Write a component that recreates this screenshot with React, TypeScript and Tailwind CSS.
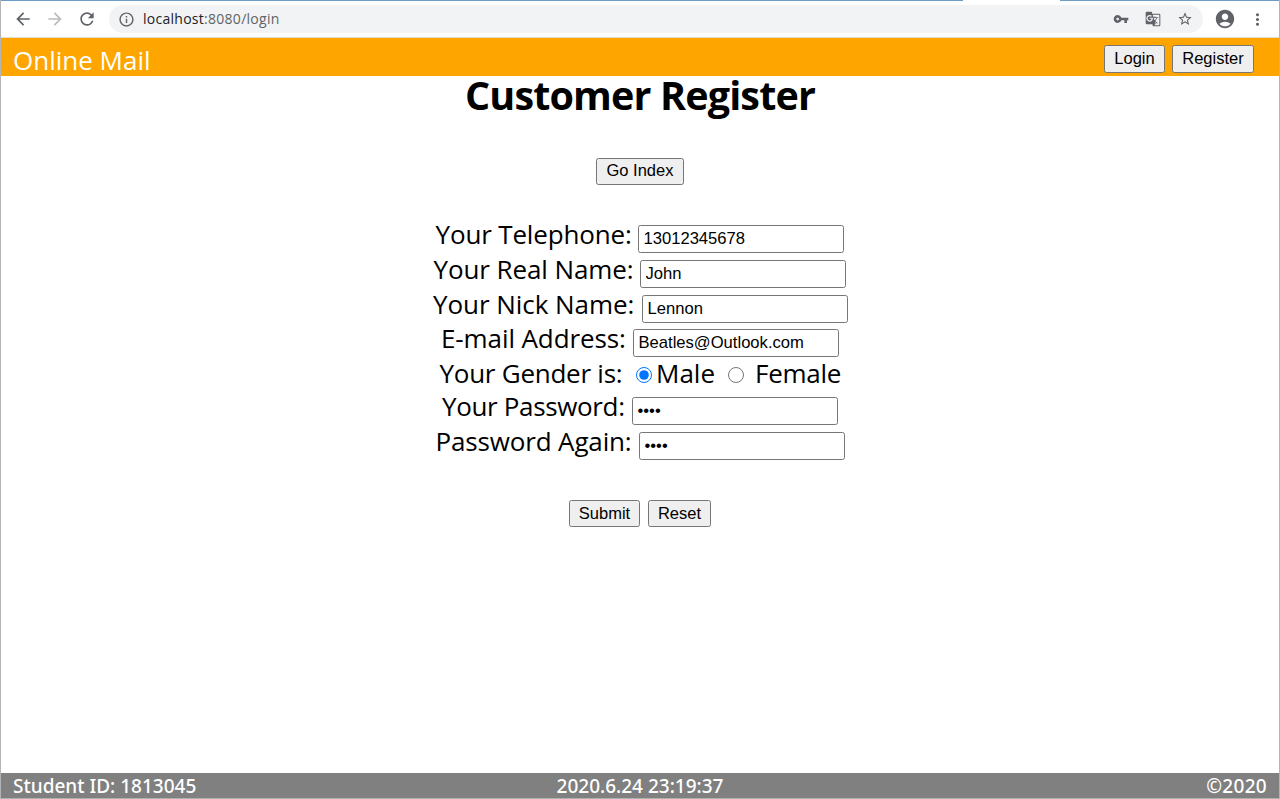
import React from 'react';
import {
  MdAccountCircle,
  MdArrowBack,
  MdArrowForward,
  MdGTranslate,
  MdInfoOutline,
  MdMoreVert,
  MdRefresh,
  MdStarBorder,
  MdVpnKey,
} from 'react-icons/md';

const buttonStyle =
  "flex shrink-0 items-center justify-center rounded-[2.5px] border border-[#767676] bg-[#efefef] font-['Liberation_Sans',sans-serif] text-[16.5px] leading-none text-black";

type FieldProps = {
  label: string;
  value: string;
  row: string;
  labelStyle: string;
  type?: string;
};

function Field({ label, value, row, labelStyle, type = 'text' }: FieldProps) {
  return (
    <div className={`flex items-end ${row}`}>
      <label className={`mb-[2px] whitespace-nowrap text-[26px] leading-[34px] ${labelStyle}`}>{label}</label>
      <input
        type={type}
        defaultValue={value}
        className="h-7 w-[206px] rounded-[2.5px] border border-[#767676] bg-white pb-[1px] pl-[4.5px] pr-1 font-['Liberation_Sans',sans-serif] text-[16.6px] leading-none text-black outline-none"
      />
    </div>
  );
}

function BrowserBar() {
  return (
    <div className="flex h-[37px] shrink-0 items-center border-b border-[#e4dccb] bg-white text-[#5f6368]">
      <MdArrowBack className="ml-3 size-5" />
      <MdArrowForward className="ml-3 size-5 text-[#babcbe]" />
      <MdRefresh className="ml-3 size-5" />
      <div className="ml-3 flex h-7 w-[1094px] items-center rounded-full bg-[#f1f3f4] pl-[9px]">
        <MdInfoOutline className="size-[17px]" />
        <span className="ml-2 text-[14px] leading-5 tracking-[0.27px]">
          <span className="text-[#202124]">localhost</span>:8080/login
        </span>
        <MdVpnKey className="ml-auto size-4" />
        <MdGTranslate className="ml-4 size-4" />
        <MdStarBorder className="ml-4 mr-[10px] size-4" />
      </div>
      <MdAccountCircle className="ml-[11px] size-[22px]" />
      <MdMoreVert className="ml-3 size-[19px]" />
    </div>
  );
}

export default function App() {
  return (
    <div className="flex h-[799px] w-[1280px] flex-col overflow-hidden border-x border-[#b4b4b4] bg-white font-['Open_Sans',sans-serif] text-black">
      <div className="flex h-px shrink-0 justify-between bg-white">
        <div className="w-[962px] bg-[#6d9cc4]" />
        <div className="w-[219px] bg-[#6d9cc4]" />
      </div>
      <BrowserBar />
      <header className="flex h-[38px] shrink-0 items-start bg-[#ffa500] pl-3 pr-[25px]">
        <span className="mt-[5px] text-[26px] leading-[34px] text-white">Online Mail</span>
        <button className={`${buttonStyle} ml-auto mt-[7px] h-7 w-[61px] pb-[2px]`}>Login</button>
        <button className={`${buttonStyle} ml-[7px] mt-[7px] h-7 w-[82px] pb-[2px]`}>Register</button>
      </header>
      <main className="flex flex-1 flex-col">
        <h1 className="-mt-px text-center text-[39.5px] font-bold leading-[40px] tracking-[-0.85px]">Customer Register</h1>
        <button className={`${buttonStyle} mt-[43px] h-[27px] w-[88px] self-center pb-[2px]`}>Go Index</button>
        <form className="mt-[33px] flex flex-col" onSubmit={(e) => e.preventDefault()}>
          <Field label="Your Telephone:" value="13012345678" row="h-[35px] pl-[434.5px]" labelStyle="w-[202.5px] tracking-[-0.15px]" />
          <Field label="Your Real Name:" value="John" row="h-[35px] pl-[432.5px]" labelStyle="w-[206.5px] tracking-[-0.1px]" />
          <Field label="Your Nick Name:" value="Lennon" row="h-[35px] pl-[432px]" labelStyle="w-[209px] tracking-[-0.05px]" />
          <Field label="E-mail Address:" value="Beatles@Outlook.com" row="h-[34px] pl-[440px]" labelStyle="w-[192px] tracking-[-0.1px]" />
          <div className="flex h-[33px] items-center pl-[438.5px] text-[26px] leading-[34px]">
            <span className="mb-[2px] w-[196.5px] whitespace-nowrap tracking-[-0.25px]">Your Gender is:</span>
            <input type="radio" name="gender" defaultChecked className="mt-[3px] size-4" />
            <span className="mb-[2px] ml-1 w-[72px]">Male</span>
            <input type="radio" name="gender" className="mt-[3px] size-4" />
            <span className="mb-[2px] ml-[11px] tracking-[-0.25px]">Female</span>
          </div>
          <Field label="Your Password:" value="1234" type="password" row="h-[35px] pl-[441px]" labelStyle="w-[190px] tracking-[-0.35px]" />
          <Field label="Password Again:" value="1234" type="password" row="h-[35px] pl-[434.5px]" labelStyle="w-[203.5px] tracking-[-0.15px]" />
          <div className="mt-10 flex justify-center gap-2">
            <button type="submit" className={`${buttonStyle} h-[27px] w-[71px] pb-px`}>Submit</button>
            <button type="reset" className={`${buttonStyle} h-[27px] w-[63px] pb-px`}>Reset</button>
          </div>
        </form>
      </main>
      <footer className="grid h-[26px] shrink-0 grid-cols-3 items-center border-b border-[#b0b0b0] bg-[#808080] px-3 font-['Noto_Sans',sans-serif] text-[19px] font-medium leading-6 text-white">
        <span>Student ID: 1813045</span>
        <span className="text-center">2020.6.24 23:19:37</span>
        <span className="text-right tracking-[0.3px]">©2020</span>
      </footer>
    </div>
  );
}
